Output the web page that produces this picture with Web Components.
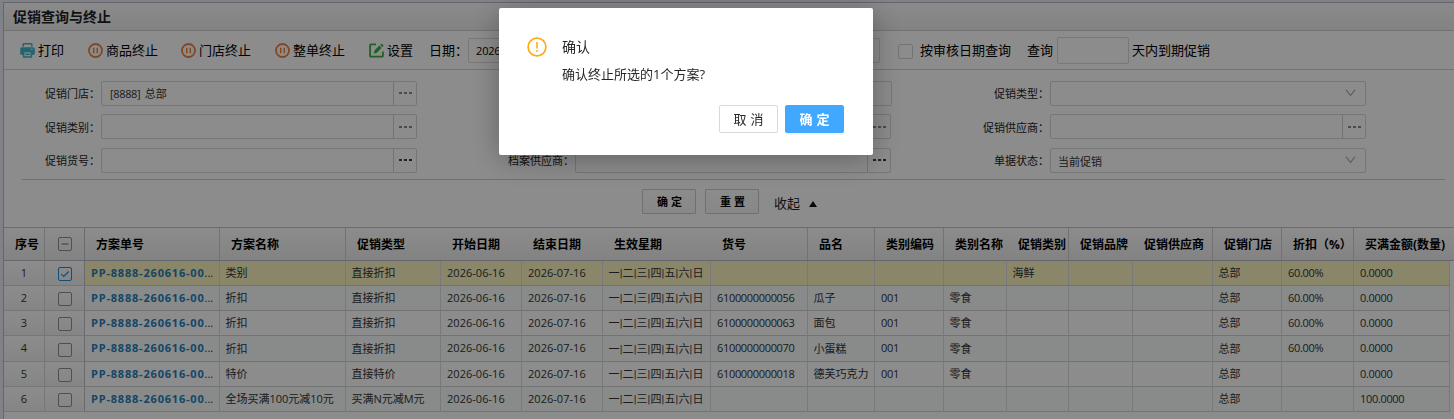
<!DOCTYPE html>
<html lang="zh-CN">
<head>
<meta charset="utf-8">
<title>促销查询与终止</title>
<style>
html,body{margin:0;height:100%;overflow:hidden}
body{font-family:"Open Sans","Noto Sans CJK SC",sans-serif;color:#000;background:#fff}
</style>
</head>
<body>
<promo-page></promo-page>
<script>
function define(name, html, setup){
  customElements.define(name, class extends HTMLElement{
    constructor(){
      super();
      const t=document.createElement('template');
      t.innerHTML=html;
      this.attachShadow({mode:'open'}).appendChild(t.content.cloneNode(true));
    }
    connectedCallback(){ if(setup) setup(this,this.shadowRoot); }
  });
}

const ICONS={
  print:'<svg width="15" height="15" viewBox="0 0 15 15"><path d="M3.2 3.6V1.6q0-.8.8-.8h7q.8 0 .8.8v2" fill="none" stroke="#3fb6cc" stroke-width="1.6"/><rect x=".2" y="4.2" width="14.6" height="7.8" rx="1.8" fill="#3fb6cc"/><path d="M3.6 8.4h7.8v5.6H3.6z" fill="#e6f7fa" stroke="#3fb6cc" stroke-width="1.5"/><path d="M5.2 11.2h4.6" stroke="#3fb6cc" stroke-width="1.3"/><path d="M10.8 6.3h1.8" stroke="#fff"/></svg>',
  pause:'<svg width="15" height="15" viewBox="0 0 15 15"><circle cx="7.5" cy="7.5" r="6.5" fill="none" stroke="#f08143" stroke-width="1.8"/><path d="M5.7 4.8v5.4M9.3 4.8v5.4" stroke="#f08143" stroke-width="1.5"/></svg>',
  edit:'<svg width="16" height="15" viewBox="0 0 16 15"><path d="M7 1.3H1.8q-.7 0-.7.7v11q0 .7.7.7h11.4q.7 0 .7-.7V8.6" fill="none" stroke="#3cb043" stroke-width="1.8"/><path d="M4.8 10.6l.7-3L10.4 2.6l2.3 2.2-5 5.1zM11.2 1.8L12.4.6l2.4 2.2-1.2 1.3z" fill="#3cb043"/></svg>'
};

define('tool-action',`<style>:host{display:flex;align-items:center;font-size:13px;line-height:18px;white-space:nowrap}
i{display:flex;margin:1px 3px 0 0}:host([icon=edit]) i{margin-right:2px}</style><i></i><slot></slot>`,(h,r)=>{r.querySelector('i').innerHTML=ICONS[h.getAttribute('icon')];});

define('text-box',`<style>:host{display:flex;box-sizing:border-box;border:1px solid #dadada;border-radius:2px;font-size:11px;align-items:center;padding-left:7px}</style><slot></slot>`);

define('check-box',`<style>:host{display:block;box-sizing:border-box;width:14px;height:14px;border:1px solid #859590;border-radius:2px}
:host([plain]){width:15px;height:15px;border-color:#d2d2d2;margin-top:2px}
:host([checked]){border-color:#1890e8}
svg{display:none}:host([checked]) .c,:host([partial]) .p{display:block}</style>
<svg class="c" width="12" height="12"><path d="M2.3 6.1l2.4 2.4 5-5" fill="none" stroke="#1890e8" stroke-width="1.2"/></svg>
<svg class="p" width="12" height="12"><path d="M2.5 6h7" stroke="#859590" stroke-width="1.4"/></svg>`);

define('form-field',`<style>:host{display:flex;height:24px;align-items:center}
label{width:103px;text-align:right;font-size:11px;margin-right:1px;white-space:nowrap;color:#222;box-sizing:border-box}
.box{box-sizing:border-box;width:316px;height:25px;border:1px solid #d7d7d7;border-radius:2px;display:flex;align-items:stretch;font-size:11px;color:#333}
:host([wide]) .box{width:317px}
.v{flex:1;display:flex;align-items:center;padding-left:8px;white-space:pre}
.b{width:22px;border-left:1px solid #d2d2d2;display:none;align-items:center;justify-content:center}
:host([kind=lookup]) .b{display:flex}
.a{display:none;padding-right:9px;align-items:center}:host([kind=select]) .a{display:flex}
:host([kind=select]) .v{padding:2px 0 0 7px}
svg{display:block;color:#666}:host([dark]) svg{color:#000}</style>
<label></label><div class="box"><span class="v"><slot></slot></span><span class="b"><svg width="13" height="2"><path d="M0 1h3M5 1h3M10 1h3" stroke="currentColor" stroke-width="1.6"/></svg></span><span class="a"><svg width="11" height="8"><path d="M1 .7l4.5 6L10 .7" fill="none" stroke="#aaa" stroke-width="1.1"/></svg></span></div>`,
(h,r)=>{r.querySelector('label').textContent=h.getAttribute('label');});

define('small-button',`<style>:host{display:flex;box-sizing:border-box;width:54px;height:25px;border:1px solid #cdcdcd;border-radius:1px;align-items:center;justify-content:center;font-size:11px;font-weight:700;white-space:pre;background:linear-gradient(#fff,#f7f7f7);padding:0 0 0 1px}</style><slot></slot>`);

define('query-form',`<style>:host{display:block;height:157px;box-sizing:border-box;padding-top:11px}
.g{display:grid;grid-template-columns:474px 475px 1fr;grid-template-rows:24px 24px 24px;row-gap:9.5px;margin-left:-7px}
hr{border:0;height:1px;background:#cbcbcb;margin:7px 9px 0 18px}
.f{display:flex;align-items:center;height:25px;margin:8.5px 0 0 638px}
small-button{margin-right:9px}
.t{font-size:13px;color:#222;margin:3px 9px 0 6px}
.f svg{margin-top:6px}</style>
<div class="g">
<form-field kind="lookup" label="促销门店："><span style="letter-spacing:-.35px;margin-right:4.5px">[8888]</span>总部</form-field><form-field wide label="促销日期："></form-field><form-field kind="select" label="促销类型："></form-field>
<form-field kind="lookup" label="促销类别："></form-field><form-field kind="lookup" label="促销品牌："></form-field><form-field kind="lookup" label="促销供应商："></form-field>
<form-field kind="lookup" dark label="促销货号："></form-field><form-field kind="lookup" dark label="档案供应商："></form-field><form-field kind="select" label="单据状态：">当前促销</form-field>
</div><hr>
<div class="f"><small-button>确 定</small-button><small-button>重 置</small-button><span class="t">收起</span><svg width="8" height="6"><path d="M0 6L4 0l4 6z" fill="#111"/></svg></div>`);

const COLS=[['方案单号',135,1],['方案名称',126,1],['促销类型',95,0],['开始日期',81,0],['结束日期',81,0],['生效星期',108,0],['货号',97,1],['品名',67,1],['类别编码',69,1],['类别名称',63,0],['促销类别',62,1],['促销品牌',64,0],['促销供应商',80,1],['促销门店',69,1],['折扣（%）',72,1],['买满金额(数量)',96,0]];
const D=['2026-06-16','2026-07-16','一|二|三|四|五|六|日'];
const ROWS=[
 ['类别','直接折扣',...D,'','','','','海鲜','','','总部','60.00%','0.0000'],
 ['折扣','直接折扣',...D,'6100000000056','瓜子','001','零食','','','','总部','60.00%','0.0000'],
 ['折扣','直接折扣',...D,'6100000000063','面包','001','零食','','','','总部','60.00%','0.0000'],
 ['折扣','直接折扣',...D,'6100000000070','小蛋糕','001','零食','','','','总部','60.00%','0.0000'],
 ['特价','直接特价',...D,'6100000000018','德芙巧克力','001','零食','','','','总部','','0.0000'],
 ['全场买满100元减10元','买满N元减M元',...D,'','','','','','','','总部','','100.0000']];
const H=[25,25,25,26,25,25];
const kind=v=>/^2026/.test(v)?'date':/^[\d.%]+$/.test(v)?'n':v.includes('|')?'wk':'cj';

define('promo-table',`<style>:host{display:block}
.r{display:grid;grid-template-columns:41px 40px ${COLS.map(c=>c[1]+'px').join(' ')};width:1446px}
.r>*{box-sizing:border-box;display:flex;align-items:center;white-space:nowrap;min-width:0}
.h{height:34px;border-top:1px solid #c4c5ca;border-bottom:1px solid #b9bbc8;background:linear-gradient(#fff,#eee);font-size:12px;font-weight:700;box-sizing:border-box;width:auto}
.h>*{padding-left:11px;border-right:1px solid transparent}
.h .l{border-right-color:#d0d0d5}
.d{font-size:11px;color:#333;background:#fff}
.d.even{background:#f7fefc}.d.sel{background:#f9f4c1}
.d>*{border-right:1px solid #dadce4;border-bottom:1px solid #d0d0d0;padding:0 0 2px 6px}
.d>.cj{padding-left:5.4px}
.d>.x{background:linear-gradient(#fff,#f2f2f2);border-color:#d8d8d8;justify-content:center;padding:0 0 2px}
.d check-box{margin-top:4px}
.h .x{justify-content:center;padding:0}.h .s{padding-left:6px}
.r>.k{border-right-color:#bfc0cb}
.n{letter-spacing:-.33px}.date{letter-spacing:.03px}
.d>.wk{font-family:Roboto,"Noto Sans CJK SC",sans-serif;letter-spacing:.15px;padding-left:5.5px}
a{color:#297ebb;font-weight:700;letter-spacing:.8px}
</style><div id="t"></div>`,(h,r)=>{
  let s='<div class="r h"><span class="x l s">序号</span><span class="x l k"><check-box partial></check-box></span>'+COLS.map(c=>`<span class="${c[2]?'l':''}">${c[0]}</span>`).join('')+'</div>';
  ROWS.forEach((row,i)=>{
    s+=`<div class="r d ${i==0?'sel':i%2?'even':''}" style="height:${H[i]}px"><span class="x">${i+1}</span><span class="x k"><check-box ${i==0?'checked':''}></check-box></span><span><a>PP-8888-260616-00</a>...</span>`+
    row.map(v=>`<span class="${kind(v)}">${v}</span>`).join('')+'</div>';
  });
  r.getElementById('t').innerHTML=s;
});

define('tool-bar',`<style>:host{display:flex;height:38px;align-items:center;border-bottom:1px solid #d2d2d2;padding-left:16px;font-size:13px;white-space:nowrap}
tool-action{margin-right:22px}.p{margin-left:2px}tool-action,.s{position:relative;top:-.5px}</style>
<tool-action icon="print">打印</tool-action><tool-action icon="pause" class="p">商品终止</tool-action><tool-action icon="pause" style="margin-left:1px">门店终止</tool-action><tool-action icon="pause" class="p">整单终止</tool-action><tool-action icon="edit" style="margin:0 16px 0 2px">设置</tool-action>
<span class="s" style="width:39px">日期：</span><text-box style="width:412px;height:25px;margin-right:18px;letter-spacing:-.2px">2026-06-16</text-box>
<check-box plain></check-box><span class="s" style="margin:0 16px 0 7px">按审核日期查询</span><span class="s">查询</span><text-box style="width:72px;height:27px;margin:0 3px 0 4px"></text-box><span class="s">天内到期促销</span>`);

define('confirm-dialog',`<style>:host{position:fixed;inset:0;background:rgba(0,0,0,.45);display:flex;justify-content:center;align-items:flex-start}
.m{box-sizing:border-box;width:374px;height:147px;margin:8px 82px 0 0;background:#fff;border-radius:2px;box-shadow:0 4px 30px rgba(0,0,0,.3);padding:28px 29px 22px 28px;display:flex;flex-direction:column;color:#262626}
.c{display:flex}.c svg{margin:1px 15px 0 0}
.t{font-size:14px;line-height:22px}.b{font-size:13px;line-height:20px;margin-top:6px}
.f{display:flex;justify-content:flex-end;gap:7px;margin-top:auto}
.f span{box-sizing:border-box;width:59px;height:28px;border:1px solid #d9d9d9;border-radius:2px;display:flex;align-items:center;justify-content:center;font-size:13px;white-space:pre;word-spacing:.8px;padding-bottom:1px}
.f .ok{background:#40a9ff;border-color:#40a9ff;color:#fff;font-weight:700;box-shadow:0 2px 0 rgba(0,0,0,.04)}</style>
<div class="m"><div class="c"><svg width="20" height="20"><circle cx="10" cy="10" r="8.9" fill="none" stroke="#faad14" stroke-width="1.7"/><path d="M10 5v6.4M10 13.3v1.6" stroke="#faad14" stroke-width="1.6"/></svg><div><div class="t">确认</div><div class="b">确认终止所选的1个方案?</div></div></div>
<div class="f"><span>取 消</span><span class="ok">确 定</span></div></div>`);

define('promo-page',`<style>:host{display:block;height:419px;background:#ecedf8;padding:2px 0 0 3px;box-sizing:border-box}
.w{height:417px;box-sizing:border-box;border:1px solid #b9bbc2;border-width:1px 0 0 1px;background:#fff}
header{box-sizing:border-box;height:28px;border-bottom:1px solid #cfcfd1;background:linear-gradient(#fcfcfc,#eee);font-size:14px;font-weight:700;line-height:27px;padding-left:9px;color:#222}</style>
<div class="w"><header>促销查询与终止</header><tool-bar></tool-bar><query-form></query-form><promo-table></promo-table></div><confirm-dialog></confirm-dialog>`);
</script>
</body>
</html>
